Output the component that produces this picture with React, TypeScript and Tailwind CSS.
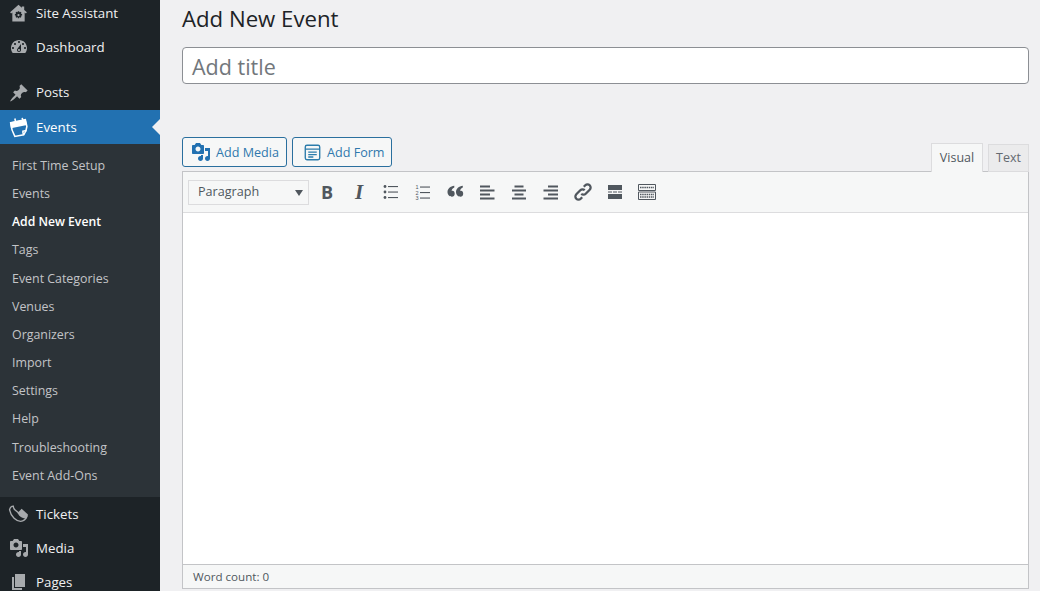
const font = { fontFamily: '"Open Sans", "Noto Sans", sans-serif' };

function Dash({ d, className = "" }: { d: string; className?: string }) {
  return (
    <svg viewBox="0 0 20 20" className={`w-5 h-5 fill-current ${className}`}>
      <path d={d} fillRule="evenodd" />
    </svg>
  );
}

const P = {
  dash: "M3.76 16h12.48c1.1-1.37 1.76-3.11 1.76-5 0-4.42-3.58-8-8-8s-8 3.58-8 8c0 1.89.66 3.63 1.76 5zM10 4c.55 0 1 .45 1 1s-.45 1-1 1-1-.45-1-1 .45-1 1-1zM6 6c.55 0 1 .45 1 1s-.45 1-1 1-1-.45-1-1 .45-1 1-1zm8 0c.55 0 1 .45 1 1s-.45 1-1 1-1-.45-1-1 .45-1 1-1zm-5.37 5.55L12 7v6c0 1.1-.9 2-2 2s-2-.9-2-2c0-.57.24-1.08.63-1.45zM4 10c.55 0 1 .45 1 1s-.45 1-1 1-1-.45-1-1 .45-1 1-1zm12 0c.55 0 1 .45 1 1s-.45 1-1 1-1-.45-1-1 .45-1 1-1zm-5 3c0-.55-.45-1-1-1s-1 .45-1 1 .45 1 1 1 1-.45 1-1z",
  pin: "M10.44 3.02l1.82-1.82 6.36 6.35-1.83 1.82c-1.05-.68-2.48-.57-3.41.36l-.75.75c-.92.93-1.04 2.35-.35 3.41l-1.83 1.82-2.41-2.41-2.8 2.79c-.42.42-3.38 2.71-3.8 2.29s1.86-3.39 2.28-3.81l2.79-2.79L4.1 9.36l1.83-1.82c1.05.69 2.48.57 3.4-.36l.75-.75c.93-.92 1.05-2.35.36-3.41z",
  media: "M13 11V4c0-.55-.45-1-1-1h-1.67L9 1H5L3.67 3H2c-.55 0-1 .45-1 1v7c0 .55.45 1 1 1h10c.55 0 1-.45 1-1zM7 4.5c1.38 0 2.5 1.12 2.5 2.5S8.38 9.5 7 9.5 4.5 8.38 4.5 7 5.62 4.5 7 4.5zM14 6h5v10.5c0 1.38-1.12 2.5-2.5 2.5S14 17.88 14 16.5s1.12-2.5 2.5-2.5c.17 0 .34.02.5.05V9h-3V6zm-4 8.05V13h2v3.5c0 1.38-1.12 2.5-2.5 2.5S7 17.88 7 16.5 8.12 14 9.5 14c.17 0 .34.02.5.05z",
  pages: "M6 15V2h10v13H6zm-1 1h8v2H3V5h2v11z",
  home: "M10 .8 1.2 8.8l1 1.2 1.3-1.1v9.6h13V8.900l1.300 1.100 1-1.200-2.800-2.600V2.500h-2.500v1.500zM9.300 7.500h1.400l.3 1.300 1.200-.6.900.9-.6 1.200 1.300.3v1.400l-1.300.3.600 1.200-.9.900-1.200-.6-.3 1.300H9.300l-.3-1.300-1.200.6-.9-.9.600-1.200-1.300-.3v-1.400l1.300-.3-.6-1.200.9-.9 1.200.6zM10 10.400a1.200 1.200 0 1 0 .01 0z",
};

function Top({ icon, label, active, flat }: { icon: React.ReactNode; label: string; active?: boolean; flat?: boolean }) {
  return (
    <div className={`relative flex h-[34px] items-center ${active ? "bg-[#2271b1] text-white" : "text-[#f0f0f1]"}`}>
      <div className={`flex w-9 justify-center pl-px ${active ? "text-white" : "text-[#a7aaad]"}`}>{icon}</div>
      <span className={`text-[13.3px] ${flat ? "" : "pt-[2px]"}`}>{label}</span>
      {active && (
        <span className="absolute right-0 top-[9px] h-0 w-0 border-y-[8px] border-r-[8px] border-y-transparent border-r-[#f0f0f2]" />
      )}
    </div>
  );
}

const sub = ["First Time Setup", "Events", "Add New Event", "Tags", "Event Categories", "Venues", "Organizers", "Import", "Settings", "Help", "Troubleshooting", "Event Add-Ons"];

function Bar({ lines }: { lines: [number, number, number][] }) {
  return (
    <svg viewBox="0 0 20 20" className="h-5 w-5 fill-[#50575e]">
      {lines.map(([x, y, w], i) => (
        <rect key={i} x={x} y={y} width={w} height="2" />
      ))}
    </svg>
  );
}

function Tool({ children }: { children: React.ReactNode }) {
  return <div className="flex h-7 w-8 items-center justify-center text-[#50575e]">{children}</div>;
}

export default function App() {
  return (
    <div className="flex h-[591px] w-[1040px] overflow-hidden bg-[#f0f0f2]" style={font}>
      <aside className="h-full w-40 shrink-0 overflow-hidden bg-[#1d2327]">
        <div className="-mt-1">
          <Top label="Site Assistant" icon={<Dash d={P.home} className="h-[19px] w-[19px]" />} />
          <Top label="Dashboard" icon={<Dash d={P.dash} />} />
          <div className="h-3" />
          <Top label="Posts" flat icon={<Dash d={P.pin} />} />
          <Top
            label="Events"
            active
            icon={
              <svg viewBox="0 0 20 20" className="h-[21px] w-[21px] fill-none stroke-white" strokeWidth="1.500">
                <path d="M2.500 5.500 16.500 2.500 18 9c-.3 3-1.300 6-3 8l-8.500 1.500C4.500 15 3 10.500 2.500 5.500z" />
                <path d="M2.800 5.800 16.300 3l.9 4L3.400 9.800z" fill="white" />
                <path d="M6.500 1.500l.8 3M13.500.8l.8 3M15 17c-.8-1.500-1-2.500-.8-3.500 1-.4 2.300-.5 3.300-.3" />
              </svg>
            }
          />
          <div className="bg-[#2c3338] pb-[7px] pt-[8px]">
            {sub.map((s) => (
              <div
                key={s}
                className={`flex h-[28.2px] items-center pl-3 ${s === "Add New Event" ? "text-[12.2px] font-semibold text-white" : "text-[12.4px] text-[#c3c4c7]"}`}
              >
                {s}
              </div>
            ))}
          </div>
          <Top
            label="Tickets"
            icon={
              <svg viewBox="0 0 20 20" className="h-[21px] w-[21px]">
                <path className="fill-none stroke-[#a7aaad]" strokeWidth="1.300" d="M1.500 5.500c.5-2 2-3.500 3.500-3.500 0 1.500.5 2.500 1.500 3.500 2.500 2.500 4.500 3.500 6.500 4.500l5 1.500c-1 3-3.500 5-6 5-4 0-9-4-10.500-11z" />
                <path className="fill-[#a7aaad]" d="M9 8.500 13 4.500l6 5.500-1 3.500c-3.500 1-7-1.500-9-5z" />
              </svg>
            }
          />
          <Top label="Media" icon={<Dash d={P.media} />} />
          <Top label="Pages" icon={<Dash d={P.pages} />} />
        </div>
      </aside>

      <main className="min-w-0 flex-1 pl-[22px] pr-[11px]">
        <h1 className="h-[47px] pt-[3px] text-[22.2px] leading-[32px] text-[#1d2327]">Add New Event</h1>
        <div className="flex h-[37px] items-center rounded-[4px] border border-[#8c8f94] bg-white pl-[9px] pt-[3px] text-[21.500px] text-[#72777c]">
          Add title
        </div>

        <div className="mt-[53px] flex h-[35px] items-start justify-between">
          <div className="flex gap-[5px]">
            <button className="flex h-[30px] w-[105px] items-center gap-[5px] rounded-[3px] border border-[#2a6f9e] bg-[#f6f7f7] pl-[8px] text-[12.600px] text-[#2f78ad]">
              <svg viewBox="0 0 20 20" className="h-5 w-5 fill-[#2271b1]">
                <path d={P.media} />
              </svg>
              <span className="pt-[2px]">Add Media</span>
            </button>
            <button className="flex h-[30px] w-[100px] items-center gap-[6px] rounded-[3px] border border-[#2a6f9e] bg-[#f6f7f7] pl-[11px] text-[12.600px] text-[#2f78ad]">
              <svg viewBox="0 0 20 20" className="h-[17px] w-[17px] fill-none stroke-[#2b7cab]" strokeWidth="1.600">
                <rect x="1.500" y="1.500" width="17" height="17" rx="2" />
                <path d="M1.500 6h17M5 9.500h10M5 12.500h10M5 15.300h6" />
              </svg>
              <span className="pt-[2px]">Add Form</span>
            </button>
          </div>
          <div className="flex items-end gap-[5px] pt-[6px]">
            <div className="relative z-10 flex h-[29px] w-[52px] items-center justify-center border border-b-0 border-[#dcdcde] bg-[#f6f7f7] text-[12.500px] text-[#50575e]">
              Visual
            </div>
            <div className="flex h-[28px] w-[41px] items-center justify-center border border-[#dcdcde] bg-[#ebebec] text-[12.500px] text-[#646970]">
              Text
            </div>
          </div>
        </div>

        <div className="-mt-px border border-[#c3c4c7] bg-white">
          <div className="flex h-[41px] items-center gap-0 border-b border-[#dcdcde] bg-[#f6f7f7] pl-[5px]">
            <div className="relative mr-[2px] flex h-[25px] w-[121px] items-center border border-[#dcdcde] bg-[#f6f7f7] pl-[9px] text-[12.600px] text-[#50575e]">
              Paragraph
              <span className="absolute right-[5px] top-[9px] h-0 w-0 border-x-[4px] border-t-[6px] border-x-transparent border-t-[#50575e]" />
            </div>
            <Tool><span className="text-[18px] font-bold leading-none">B</span></Tool>
            <Tool><span className="text-[21px] font-bold italic leading-none" style={{ fontFamily: '"Liberation Serif", serif' }}>I</span></Tool>
            <Tool>
              <svg viewBox="0 0 20 20" className="h-5 w-5 fill-[#50575e]">
                <circle cx="4" cy="4.500" r="1.400" /><circle cx="4" cy="10" r="1.400" /><circle cx="4" cy="15.500" r="1.400" />
                <rect x="7" y="4" width="10" height="1.100" /><rect x="7" y="9.500" width="10" height="1.100" /><rect x="7" y="15" width="10" height="1.100" />
              </svg>
            </Tool>
            <Tool>
              <svg viewBox="0 0 20 20" className="h-5 w-5 fill-[#50575e]">
                <text x="2.500" y="7" fontSize="5.500" fontFamily="Liberation Sans">1</text>
                <text x="2.500" y="12.500" fontSize="5.500" fontFamily="Liberation Sans">2</text>
                <text x="2.500" y="18" fontSize="5.500" fontFamily="Liberation Sans">3</text>
                <rect x="7" y="4.500" width="10" height="1.100" /><rect x="7" y="10" width="10" height="1.100" /><rect x="7" y="15.500" width="10" height="1.100" />
              </svg>
            </Tool>
            <Tool>
              <svg viewBox="0 0 20 20" className="h-5 w-5 fill-[#50575e]">
                <path d="M9.300 3.800v1.700C7.400 6.300 6.700 7.500 6.700 9c.3-.1.500-.2.800-.2 1.300 0 2.200 1.200 2.200 2.900 0 1.800-1.200 3.100-2.800 3.100-2.100 0-4.400-1.600-4.400-4.700 0-3.500 2.900-5.800 6.800-6.300zM17.800 3.800v1.700c-1.900.8-2.600 2-2.600 3.500.3-.1.500-.2.800-.2 1.300 0 2.200 1.200 2.200 2.900 0 1.800-1.200 3.100-2.800 3.100-2.100 0-4.400-1.600-4.400-4.700 0-3.500 2.900-5.800 6.800-6.300z" />
              </svg>
            </Tool>
            <Tool><Bar lines={[[3, 3.500, 10], [3, 7.500, 14.500], [3, 11.500, 10], [3, 15.500, 14.500]]} /></Tool>
            <Tool><Bar lines={[[5.500, 3.500, 9], [3, 7.500, 14], [5.500, 11.500, 9], [3, 15.500, 14]]} /></Tool>
            <Tool><Bar lines={[[7, 3.500, 10], [2.500, 7.500, 14.500], [7, 11.500, 10], [2.500, 15.500, 14.500]]} /></Tool>
            <Tool>
              <svg viewBox="0 0 20 20" className="h-5 w-5 fill-none stroke-[#50575e]" strokeWidth="2.300">
                <path d="M8.300 11.700a3.100 3.100 0 0 0 4.400 0l4-4a3.100 3.100 0 0 0-4.400-4.400l-1.500 1.500" />
                <path d="M11.700 8.300a3.100 3.100 0 0 0-4.400 0l-4 4a3.100 3.100 0 0 0 4.400 4.400l1.500-1.500" />
              </svg>
            </Tool>
            <Tool>
              <svg viewBox="0 0 20 20" className="h-5 w-5 fill-[#50575e]">
                <rect x="3" y="3" width="14" height="5" /><rect x="3" y="9.500" width="4" height="1" /><rect x="8" y="9.500" width="4" height="1" /><rect x="13" y="9.500" width="4" height="1" /><rect x="3" y="12" width="14" height="5" />
              </svg>
            </Tool>
            <Tool>
              <svg viewBox="0 0 20 20" className="h-5 w-5">
                <path className="fill-none stroke-[#50575e]" d="M1.500 2.500h17v6h-17zM1.500 10h17v7.500h-17z" />
                <path className="fill-none stroke-[#50575e]" strokeDasharray="1.500 0.700" strokeWidth="1.500" d="M3 5.500h14M3 12.500h14M3 15h14" />
              </svg>
            </Tool>
          </div>
          <div className="h-[351px] bg-white" />
          <div className="flex h-6 items-center border-t border-[#c3c4c7] bg-[#f6f7f7] pl-[10px] text-[11.600px] text-[#50575e]">
            Word count: 0
          </div>
        </div>
      </main>
    </div>
  );
}
